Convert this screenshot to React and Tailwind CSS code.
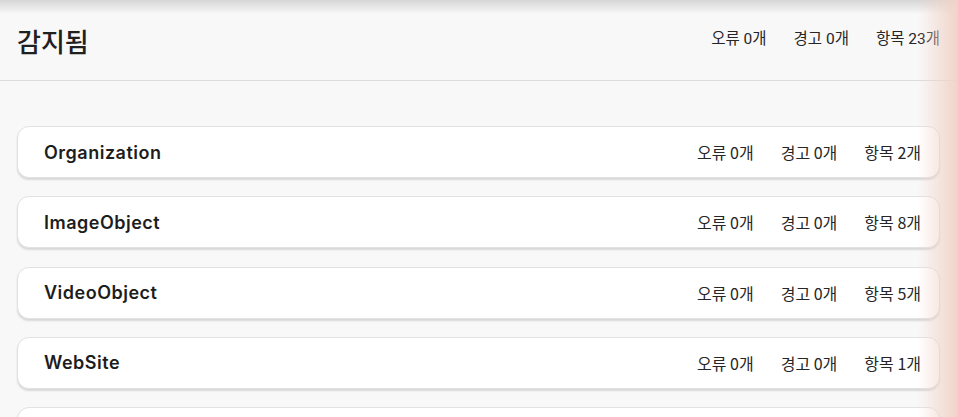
import React from 'react';

const rows = [
  { name: 'Organization', errors: 0, warnings: 0, items: 2 },
  { name: 'ImageObject', errors: 0, warnings: 0, items: 8 },
  { name: 'VideoObject', errors: 0, warnings: 0, items: 5 },
  { name: 'WebSite', errors: 0, warnings: 0, items: 1 },
  { name: 'BreadcrumbList', errors: 0, warnings: 0, items: 7 },
];

const Stats = ({ errors, warnings, items, className = '' }) => (
  <div className={`flex items-center gap-[27px] text-[#262626] ${className}`}>
    <span>오류 {errors}개</span>
    <span>경고 {warnings}개</span>
    <span>항목 {items}개</span>
  </div>
);

const Row = ({ row }) => (
  <div className="flex h-[52px] shrink-0 items-center justify-between rounded-[12px] border border-[#e2e2e2] bg-white pl-[26px] pr-[18px] shadow-[0_2px_2px_rgba(0,0,0,0.13)]">
    <span className="font-['Inter',sans-serif] text-[18px] font-semibold tracking-[0.5px] text-[#1d1d1d]">{row.name}</span>
    <Stats errors={row.errors} warnings={row.warnings} items={row.items} className="text-[16px]" />
  </div>
);

export default function App() {
  return (
    <div className="relative h-[417px] w-[958px] overflow-hidden bg-[#f8f8f8] font-['Noto_Sans_CJK_KR','Noto_Sans',sans-serif]">
      {/* Header */}
      <div className="flex h-[81px] items-center justify-between border-b border-[#dcdcdc] pl-[17px] pr-[18px]">
        <h1 className="text-[26px] font-medium text-[#202020]">감지됨</h1>
        <Stats errors={0} warnings={0} items={23} className="text-[15.5px] font-['Roboto','Noto_Sans_CJK_KR',sans-serif]" />
      </div>

      {/* List */}
      <div className="flex flex-col gap-[18.3px] pl-[17px] pr-[18px] pt-[45px]">
        {rows.map(row => <Row key={row.name} row={row} />)}
      </div>

      {/* top shadow */}
      <div className="pointer-events-none absolute inset-x-0 top-0 h-[14px] bg-gradient-to-b from-[#d6d6d6] to-transparent" />
      {/* right tint */}
      <div className="pointer-events-none absolute inset-y-0 right-0 w-[40px] bg-gradient-to-r from-transparent to-[#f1d3c8]" />
    </div>
  );
}
